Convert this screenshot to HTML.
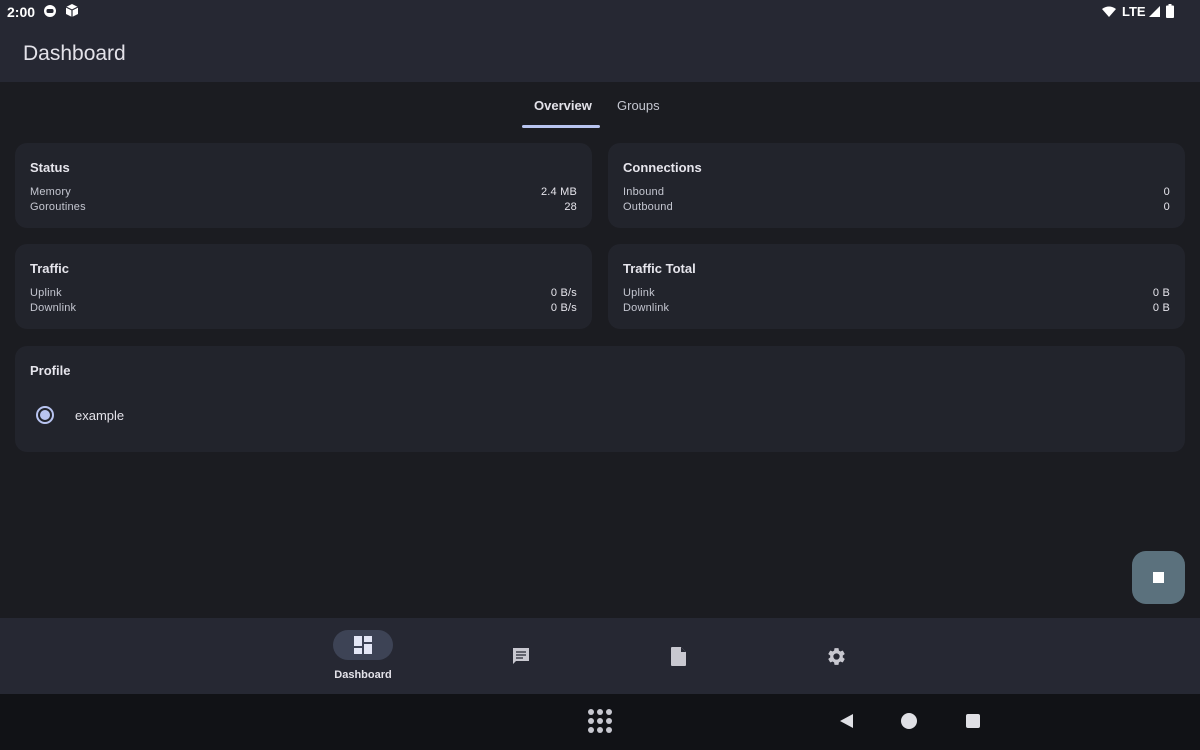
<!DOCTYPE html>
<html><head><meta charset="utf-8"><style>
*{margin:0;padding:0;box-sizing:border-box}
body{width:1200px;height:750px;overflow:hidden;background:#1b1c21;font-family:"Liberation Sans",sans-serif;color:#e3e2e9;position:relative}
.top{position:absolute;left:0;top:0;width:1200px;height:82px;background:#262833}
.sb{position:absolute;top:4px;font-size:14px;font-weight:bold;color:#fff}
.title{position:absolute;left:23px;top:42px;font-size:21px;color:#e3e2e9}
.tab{position:absolute;top:98px;font-size:13px;font-weight:bold}
.ind{position:absolute;left:522px;top:125px;width:78px;height:3px;background:#b8c4f0;border-radius:2px}
.card{position:absolute;background:#22242c;border-radius:12px}
.card h3{position:absolute;left:15px;top:17px;font-size:13px;font-weight:bold;color:#e6e5ec}
.row{position:absolute;left:15px;right:15px;font-size:11px;color:#c4c6d0;letter-spacing:.2px}
.row span{position:absolute;right:0;color:#e6e5ec}
.bn{position:absolute;left:0;top:618px;width:1200px;height:76px;background:#262833}
.sys{position:absolute;left:0;top:694px;width:1200px;height:56px;background:#111216}
</style></head><body>
<div class="top"></div>
<div class="sb" style="left:7px">2:00</div>
<svg style="position:absolute;left:43px;top:4px" width="14" height="14" viewBox="0 0 14 14"><circle cx="7" cy="7" r="6" fill="#fff"/><rect x="3.5" y="5" width="7" height="4" rx="1.5" fill="#262833"/></svg>
<svg style="position:absolute;left:65px;top:3px" width="14" height="15" viewBox="0 0 14 15"><path d="M7 1L13 4V11L7 14L1 11V4Z" fill="#fff"/><path d="M1 4L7 7L13 4M7 7V14" stroke="#262833" stroke-width="1.2" fill="none"/></svg>
<svg style="position:absolute;left:1102px;top:6px" width="14" height="11" viewBox="0 0 14 11"><path d="M0 3Q7 -2 14 3L7 11Z" fill="#fff"/></svg>
<div class="sb" style="left:1122px;font-size:13px">LTE</div>
<svg style="position:absolute;left:1149px;top:6px" width="11" height="11"><path d="M11 0V11H0Z" fill="#fff"/></svg>
<svg style="position:absolute;left:1166px;top:4px" width="8" height="14"><rect x="2.5" y="0" width="3" height="2" fill="#fff"/><rect x="0" y="1.5" width="8" height="12.5" rx="1" fill="#fff"/></svg>
<div class="title">Dashboard</div>
<div class="tab" style="left:534px;color:#e3e2e9">Overview</div>
<div class="tab" style="left:617px;color:#c4c6d0;font-weight:normal">Groups</div>
<div class="ind"></div>

<div class="card" style="left:15px;top:143px;width:577px;height:85px"><h3>Status</h3>
<div class="row" style="top:43px">Memory<span>2.4 MB</span></div><div class="row" style="top:58px">Goroutines<span>28</span></div></div>
<div class="card" style="left:608px;top:143px;width:577px;height:85px"><h3>Connections</h3>
<div class="row" style="top:43px">Inbound<span>0</span></div><div class="row" style="top:58px">Outbound<span>0</span></div></div>
<div class="card" style="left:15px;top:244px;width:577px;height:85px"><h3>Traffic</h3>
<div class="row" style="top:43px">Uplink<span>0 B/s</span></div><div class="row" style="top:58px">Downlink<span>0 B/s</span></div></div>
<div class="card" style="left:608px;top:244px;width:577px;height:85px"><h3>Traffic Total</h3>
<div class="row" style="top:43px">Uplink<span>0 B</span></div><div class="row" style="top:58px">Downlink<span>0 B</span></div></div>
<div class="card" style="left:15px;top:346px;width:1170px;height:106px"><h3>Profile</h3>
<svg style="position:absolute;left:20px;top:59px" width="20" height="20"><circle cx="10" cy="10" r="8" fill="none" stroke="#b8c4f0" stroke-width="2"/><circle cx="10" cy="10" r="5" fill="#b8c4f0"/></svg>
<div style="position:absolute;left:60px;top:62px;font-size:13px;color:#e3e2e9">example</div></div>

<div style="position:absolute;left:1132px;top:551px;width:53px;height:53px;border-radius:14px;background:#5b717d"><div style="position:absolute;left:21px;top:21px;width:11px;height:11px;background:#fff"></div></div>

<div class="bn"></div>
<div style="position:absolute;left:333px;top:630px;width:60px;height:30px;border-radius:15px;background:#3d4355"></div>
<svg style="position:absolute;left:354px;top:636px" width="18" height="18" viewBox="0 0 18 18" fill="#e3e6f5"><rect x="0" y="0" width="8" height="10"/><rect x="0" y="12" width="8" height="6"/><rect x="10" y="0" width="8" height="6"/><rect x="10" y="8" width="8" height="10"/></svg>
<div style="position:absolute;left:333px;top:669px;width:60px;text-align:center;font-size:11px;font-weight:bold;color:#e3e2e9">Dashboard</div>
<svg style="position:absolute;left:511px;top:646px" width="20" height="20" viewBox="0 0 20 20"><path d="M2 2H18V15H5L2 18Z" fill="#c8c8d0"/><path d="M5 6H15M5 9H15M5 12H12" stroke="#262833" stroke-width="1.3"/></svg>
<svg style="position:absolute;left:670px;top:646px" width="17" height="21" viewBox="0 0 17 21"><path d="M2 1H11L16 6V19Q16 20 15 20H2Q1 20 1 19V2Q1 1 2 1Z" fill="#c8c8d0"/><path d="M11 1V6H16" fill="#262833"/></svg>
<svg style="position:absolute;left:826px;top:646px" width="21" height="21" viewBox="0 0 24 24"><path fill="#c8c8d0" d="M19.14 12.94c.04-.3.06-.61.06-.94s-.02-.64-.07-.94l2.030-1.58a.49.49 0 0 0 .12-.61l-1.92-3.32a.49.49 0 0 0-.59-.22l-2.39.96c-.5-.38-1.030-.7-1.62-.94l-.36-2.54a.48.48 0 0 0-.48-.41h-3.84c-.24 0-.43.17-.47.41l-.36 2.54c-.59.24-1.13.57-1.62.94l-2.39-.96a.49.49 0 0 0-.59.22L2.74 8.87a.47.47 0 0 0 .12.61l2.030 1.58c-.05.3-.09.63-.09.94s.02.64.07.94l-2.030 1.58a.49.49 0 0 0-.12.61l1.92 3.32c.12.22.37.29.59.22l2.39-.96c.5.38 1.030.7 1.62.94l.36 2.54c.05.24.24.41.48.41h3.84c.24 0 .44-.17.47-.41l.36-2.54c.59-.24 1.13-.56 1.62-.94l2.39.96c.22.08.47 0 .59-.22l1.92-3.32a.47.47 0 0 0-.12-.61l-2.010-1.58zM12 15.6A3.6 3.6 0 1 1 12 8.4a3.6 3.6 0 0 1 0 7.2z"/></svg>
<div class="sys"></div>
<svg style="position:absolute;left:587px;top:708px" width="26" height="26" viewBox="0 0 26 26" fill="#c8c8d0"><circle cx="4" cy="4" r="3"/><circle cx="13" cy="4" r="3"/><circle cx="22" cy="4" r="3"/><circle cx="4" cy="13" r="3"/><circle cx="13" cy="13" r="3"/><circle cx="22" cy="13" r="3"/><circle cx="4" cy="22" r="3"/><circle cx="13" cy="22" r="3"/><circle cx="22" cy="22" r="3"/></svg>
<svg style="position:absolute;left:838px;top:713px" width="16" height="16"><path d="M15 1V15L2 8Z" fill="#e0e0e5"/></svg>
<div style="position:absolute;left:901px;top:713px;width:16px;height:16px;border-radius:50%;background:#e0e0e5"></div>
<div style="position:absolute;left:966px;top:714px;width:14px;height:14px;border-radius:2px;background:#e0e0e5"></div>
</body></html>
